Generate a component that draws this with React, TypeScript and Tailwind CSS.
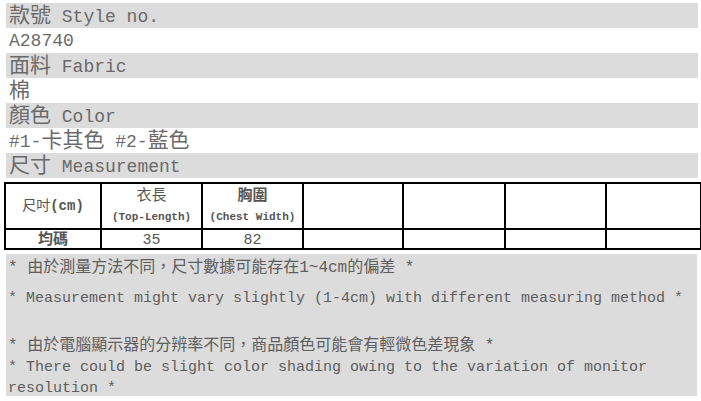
import React from "react";

const F = "font-['Liberation_Mono','Noto_Sans_CJK_TC',monospace]";

function C({ children }: { children: React.ReactNode }) {
  return <span className="text-[21px]">{children}</span>;
}

function Bar({ gray, children }: { gray?: boolean; children: React.ReactNode }) {
  return (
    <div
      className={`h-[25px] flex items-center pl-[3px] pt-[1px] whitespace-pre text-[18px] leading-none text-[#6a6a6a] ${
        gray ? "bg-[#dcdcdc]" : "bg-white"
      }`}
    >
      <span>{children}</span>
    </div>
  );
}

export default function App() {
  const cols = [96, 101, 101, 100, 102, 101, 95];
  return (
    <div className={`w-[701px] h-[401px] bg-white overflow-hidden ${F}`}>
      <div className="ml-[6px] mt-[3px] w-[692px]">
        <Bar gray>
          <C>款號</C> Style no.
        </Bar>
        <Bar>A28740</Bar>
        <Bar gray>
          <C>面料</C> Fabric
        </Bar>
        <Bar>
          <C>棉</C>
        </Bar>
        <Bar gray>
          <C>顏色</C> Color
        </Bar>
        <Bar>
          #1-<C>卡其色</C> #2-<C>藍色</C>
        </Bar>
        <Bar gray>
          <C>尺寸</C> Measurement
        </Bar>
      </div>

      <table className="mt-[4px] ml-[4px] w-[696px] border-collapse table-fixed text-[#555555]">
        <colgroup>
          {cols.map((w, i) => (
            <col key={i} style={{ width: w }} />
          ))}
        </colgroup>
        <tbody>
          <tr>
            <td className="border-2 border-black h-[46px] p-0 text-center align-middle">
              <span className="text-[14px]">尺吋</span>
              <span className="text-[14px] font-bold">(cm)</span>
            </td>
            <td className="border-2 border-black h-[46px] p-0 text-center align-middle">
              <div className="flex flex-col items-center gap-[8px] leading-none">
                <span className="text-[15px]">衣長</span>
                <span className="text-[11px] font-bold">(Top-Length)</span>
              </div>
            </td>
            <td className="border-2 border-black h-[46px] p-0 text-center align-middle">
              <div className="flex flex-col items-center gap-[8px] leading-none">
                <span className="text-[15px] font-bold">胸圍</span>
                <span className="text-[11px] font-bold">(Chest Width)</span>
              </div>
            </td>
            <td className="border-2 border-black h-[46px] p-0"></td>
            <td className="border-2 border-black h-[46px] p-0"></td>
            <td className="border-2 border-black h-[46px] p-0"></td>
            <td className="border-2 border-black h-[46px] p-0"></td>
          </tr>
          <tr>
            <td className="border-2 border-black h-[20px] p-0 pt-[2px] text-center align-middle leading-none text-[15px] font-bold">
              均碼
            </td>
            <td className="border-2 border-black h-[20px] p-0 pt-[2px] text-center align-middle leading-none text-[15px]">
              35
            </td>
            <td className="border-2 border-black h-[20px] p-0 pt-[2px] text-center align-middle leading-none text-[15px]">
              82
            </td>
            <td className="border-2 border-black h-[20px] p-0"></td>
            <td className="border-2 border-black h-[20px] p-0"></td>
            <td className="border-2 border-black h-[20px] p-0"></td>
            <td className="border-2 border-black h-[20px] p-0"></td>
          </tr>
        </tbody>
      </table>

      <div className="mt-[4px] ml-[6px] w-[691px] h-[142px] bg-[#dcdcdc] pl-[2px] pt-[3px] text-[#5e5e5e]">
        <div className="text-[16px] leading-[22px] whitespace-pre">* 由於測量方法不同，尺寸數據可能存在1~4cm的偏差 *</div>
        <div className="mt-[9px] text-[15px] leading-[22px]">
          * Measurement might vary slightly (1-4cm) with different measuring method *
        </div>
        <div className="mt-[25px] text-[16px] leading-[22px] whitespace-pre">* 由於電腦顯示器的分辨率不同，商品顏色可能會有輕微色差現象 *</div>
        <div className="text-[15px] leading-[21px]">
          * There could be slight color shading owing to the variation of monitor resolution *
        </div>
      </div>
    </div>
  );
}
